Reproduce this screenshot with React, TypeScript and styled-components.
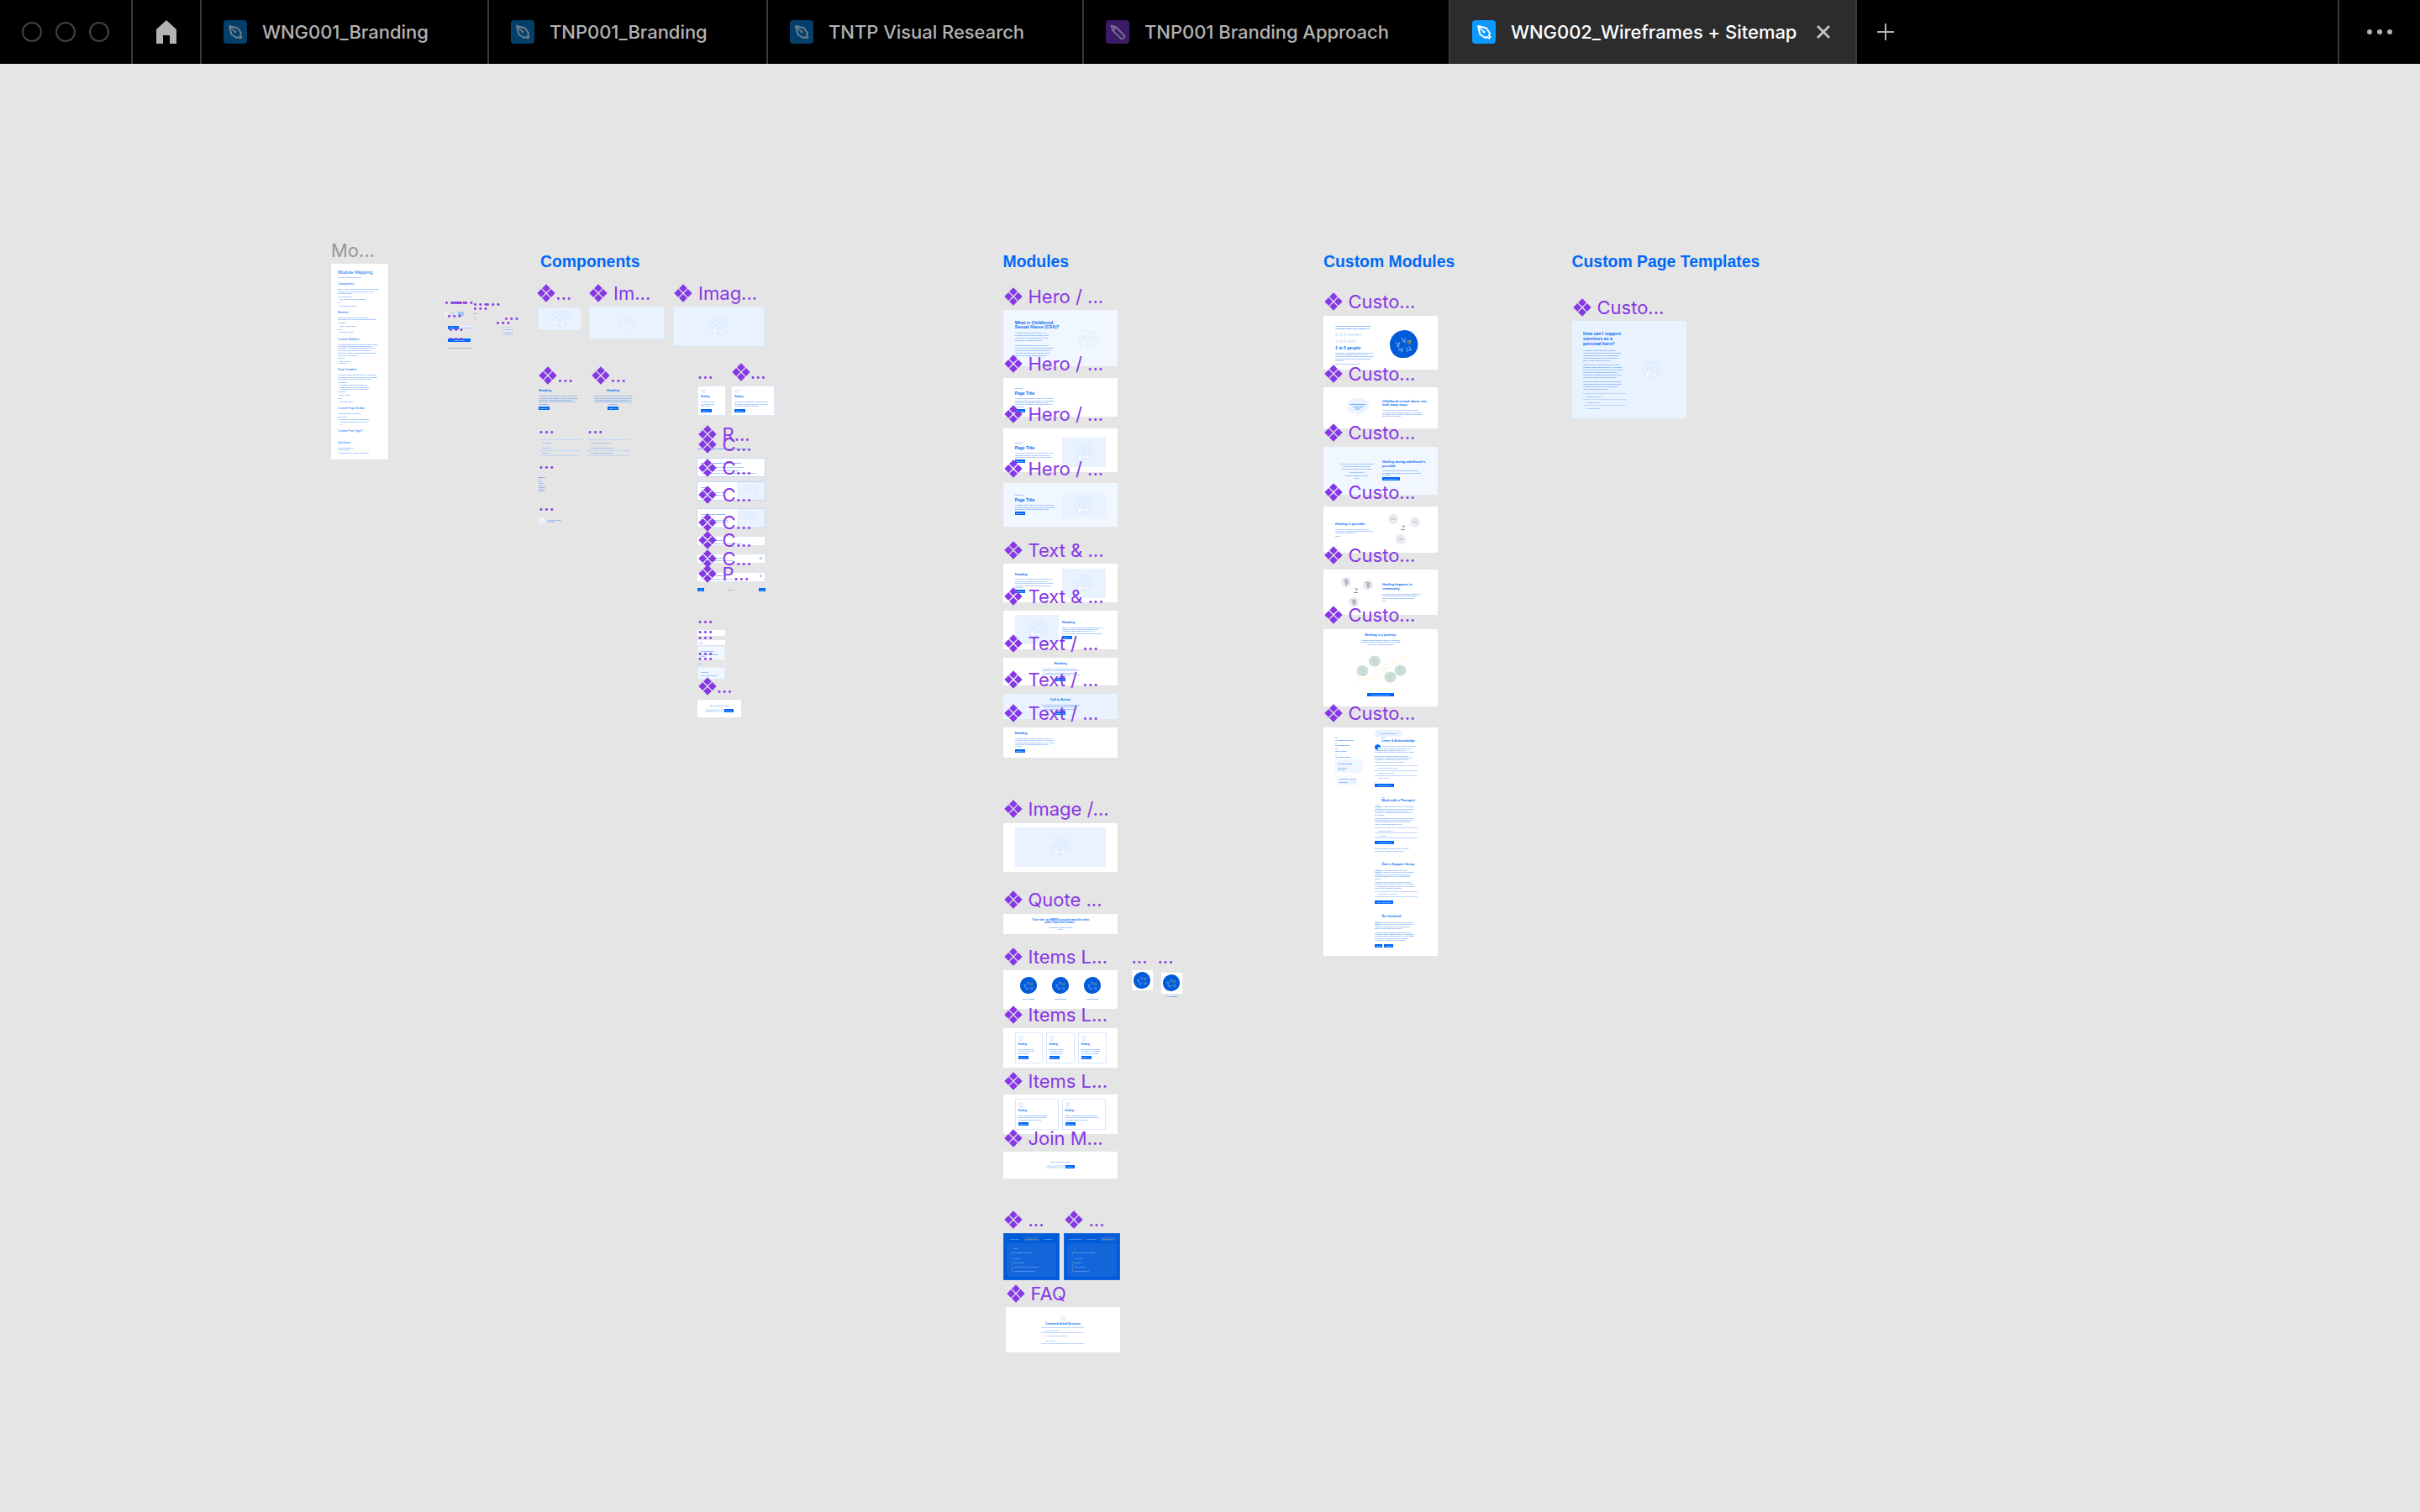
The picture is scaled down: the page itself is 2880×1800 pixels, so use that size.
import React from 'react';
import styled, { createGlobalStyle } from 'styled-components';

const BLUE = '#0069f7';
const PURPLE = '#8638e5';
const TINT = '#e9f2ff';
const PALE = '#f0f7ff';
const DEEP = '#005bd9';

const GlobalStyle = createGlobalStyle`
  body { margin: 0; background: #e5e5e5; font-family: Inter, "Liberation Sans", sans-serif; }
  * { box-sizing: border-box; }
`;

/* ---------- window chrome ---------- */

const Window = styled.div`
  width: 2880px;
  height: 1800px;
  display: flex;
  flex-direction: column;
  overflow: hidden;
  background: #e5e5e5;
`;

const TabBar = styled.header`
  display: flex;
  height: 76px;
  flex: none;
  background: #000;
`;

const WindowControls = styled.div`
  display: flex;
  align-items: center;
  gap: 16px;
  width: 158px;
  padding-left: 26px;
  border-right: 2px solid #3a3a3a;
`;

const Control = styled.span`
  width: 24px;
  height: 24px;
  border: 2px solid #434343;
  border-radius: 50%;
`;

const HomeButton = styled.div`
  display: flex;
  align-items: center;
  justify-content: center;
  width: 82px;
  border-right: 2px solid #3a3a3a;
`;

const Tab = styled.div<{ $w: number; $active?: boolean }>`
  display: flex;
  align-items: center;
  width: ${(p) => p.$w}px;
  padding-left: 26px;
  border-right: 2px solid #3a3a3a;
  background: ${(p) => (p.$active ? '#2c2c2c' : '#000')};
  color: ${(p) => (p.$active ? '#fff' : '#b3b3b3')};
`;

const TabIcon = styled.span<{ $bg: string }>`
  display: flex;
  width: 28px;
  height: 28px;
  border-radius: 4px;
  background: ${(p) => p.$bg};
`;

const TabTitle = styled.span`
  margin-left: 18px;
  font-size: 22px;
  line-height: 28px;
  font-weight: 500;
  letter-spacing: -0.04px;
  white-space: nowrap;
`;

const CloseIcon = styled.svg`
  margin-left: auto;
  margin-right: 29px;
`;

const NewTab = styled.div`
  display: flex;
  align-items: center;
  flex: 1;
  padding-left: 24px;
`;

const MoreButton = styled.div`
  display: flex;
  align-items: center;
  justify-content: center;
  gap: 6px;
  width: 98px;
  border-left: 2px solid #3a3a3a;
`;

const MoreDot = styled.span`
  width: 6px;
  height: 6px;
  border-radius: 50%;
  background: #b3b3b3;
`;

const PenGlyph = ({ color }: { color: string }) => (
  <svg width="28" height="28" viewBox="0 0 28 28" fill="none" stroke={color} strokeWidth="2" strokeLinejoin="round">
    <path d="M7 7 L17 9.5 L21 15.5 L20 18 L21.5 20 L20 21.5 L18 20 L15.5 21 L9.5 17 Z" />
    <path d="M7 7 L13.2 13.2" strokeWidth="1.5" />
    <circle cx="14" cy="14" r="1.4" fill={color} stroke="none" />
  </svg>
);

const MarkerGlyph = ({ color }: { color: string }) => (
  <svg width="28" height="28" viewBox="0 0 28 28" fill="none" stroke={color} strokeWidth="2" strokeLinejoin="round">
    <path d="M6.5 6.5 L12.5 8.5 L22.5 19 Q21.5 22 18.8 22.6 L8.5 12.5 Z" />
    <path d="M8.5 12.5 L12.5 8.5" />
  </svg>
);

/* ---------- drawings inside the frames ---------- */

const Scribble = ({ w, h = w * 0.85, color = '#c4dbf8' }: { w: number; h?: number; color?: string }) => (
  <svg width={w} height={h} viewBox="0 0 80 66" preserveAspectRatio="none" fill="none" stroke={color} strokeWidth="1.5" strokeDasharray="7 2">
    <path d="M8 6 Q22 0 34 6 T58 4 M4 26 Q14 16 22 24 T40 20 Q34 8 24 12 M40 20 Q52 10 60 18 T76 24" />
    <path d="M2 34 Q12 28 18 36 T14 50 Q6 48 8 40 M22 30 Q34 26 38 36 T28 46 Q20 42 22 30" />
    <path d="M44 26 Q56 22 58 34 T46 44 Q40 38 44 26 M62 28 Q76 26 76 38 T64 48 Q56 42 62 28" />
    <path d="M8 60 Q18 50 30 58 T50 56 Q60 50 70 60 M34 62 Q40 50 48 62 M52 12 Q66 4 72 14" />
    <path d="M21 44 h6 v12 h-6z M48 48 h5 v8 h-5z" fill="#fff" stroke="none" />
  </svg>
);

const PeopleDisc = ({ d }: { d: number }) => (
  <svg width={d} height={d} viewBox="0 0 60 60" fill="none" strokeWidth="1.7">
    <path d="M31 0 C47 0 60 13 60 31 C60 48 47 59 29 60 C12 60 0 48 0 30 C0 13 14 1 31 0Z" fill={DEEP} />
    <g stroke="#8fb6ec">
      <path d="M12 28 l7 1 l-4 7 M21 26 l-3 10 l3 3 M24 16 l4 6 l6 -4 M27 26 l4 -4 l2 6" />
      <path d="M18 44 l6 -4 l2 6 M28 38 l-3 9 M34 36 l5 7 l-3 4 M41 34 l5 9 l-6 -1" />
    </g>
    <path d="M35 24 l9 -2 l-6 8 M45 22 l-2 9" stroke="#b8a345" />
  </svg>
);

const Bubble = () => (
  <svg width="26" height="22" viewBox="0 0 26 22">
    <path d="M13 0 C20 0 26 3 26 9 C26 14 21 17.5 16 18 L11 22 L12 18 C5 18 0 15 0 9 C0 3 6 0 13 0Z" fill="#eaf3ff" />
    <path d="M4 7.5 H22 M7 10.5 H19 M10 13 H16" stroke="#4a92f5" strokeWidth="1" strokeDasharray="1.6 .5" />
  </svg>
);

const Circles = ({ busy }: { busy?: boolean }) => (
  <svg width="40" height="36" viewBox="0 0 40 36" fill="none">
    <path d="M10 8 L18 16 L32 10 M18 16 L17 28" stroke="#f0f0f2" strokeWidth=".6" />
    {[[7, 6], [33, 9.5], [16, 30]].map(([x, y]) => (
      <g key={x}>
        <circle cx={x} cy={y} r="6" fill="#e8ebf1" />
        {busy ? (
          <path d={`M${x - 3} ${y - 3}l6 1l-5 2l5 1l-4 2M${x} ${y - 4}v8`} stroke="#8b919c" strokeWidth=".7" />
        ) : (
          <path d={`M${x - 2.5} ${y}h5`} stroke="#8b919c" strokeWidth=".9" strokeDasharray="1 .4" />
        )}
      </g>
    ))}
    <path d="M17.500 13.5l3 1l-2 2M16 18.500h5" stroke="#555b66" strokeWidth=".7" />
  </svg>
);

const Journey = () => (
  <svg width="64" height="34" viewBox="0 0 64 34" fill="none">
    <path d="M2 32 C12 24 34 34 37 22 C38 14 18 18 26 22 C34 26 42 12 40 12 C34 10 34 18 40 17 C50 16 52 4 42 4 C38 4 40 12 48 10 C56 8 54 2 60 3 C64 6 56 6 58 1" stroke="#ffeed6" strokeWidth=".9" />
    {[[25, 8], [10.5, 19.5], [55.5, 19], [43.500, 27]].map(([x, y]) => (
      <g key={x}>
        <ellipse cx={x} cy={y} rx="7" ry="6.6" fill="#cddfd9" />
        <path d={`M${x - 3} ${y - 2}l5 -1l-4 3l5 1M${x - 2} ${y + 3}h4`} stroke="#b4cbc3" strokeWidth=".7" />
      </g>
    ))}
  </svg>
);

/* ---------- frame contents ---------- */

const COPY =
  'Lorem ipsum dolor sit amet, consectetur adipiscing elit sed do eiusmod tempor incididunt ut labore et dolore magna aliqua enim ad minim veniam quis nostrud exercitation ullamco laboris nisi aliquip ex ea commodo consequat duis aute irure dolor in reprehenderit voluptate velit esse cillum dolore eu fugiat nulla pariatur excepteur sint occaecat cupidatat non proident'.split(' ');

/* Takes whole words from the copy until they fill the given width. */
const wordsFor = (start: number, w: number) => {
  const max = w / 0.93;
  let out = '';
  for (let i = start; i < COPY.length; i += 1) {
    const next = out ? `${out} ${COPY[i]}` : COPY[i];
    if (next.length > max + 2) {
      if (out) break;
      return COPY[i].slice(0, Math.max(1, Math.round(max)));
    }
    out = next;
  }
  return out;
};

type Item = { top: number; h: number; node: (ox: number, oy: number) => React.ReactNode };
type Col = { x: number; w: number; center?: boolean; items: Item[] };

const Row = styled.div`
  display: flex;
  align-items: flex-start;
`;

const Column = styled.div<{ $ml: number; $w: number; $center?: boolean }>`
  display: flex;
  flex-direction: column;
  flex: none;
  align-items: ${(p) => (p.$center ? 'center' : 'flex-start')};
  width: ${(p) => p.$w}px;
  margin-left: ${(p) => p.$ml}px;
`;

const Slot = styled.div<{ $mt: number; $h: number }>`
  flex: none;
  height: ${(p) => p.$h}px;
  margin-top: ${(p) => p.$mt}px;
`;

const Heading = styled.div<{ $size: number; $color: string; $weight: number }>`
  font-family: "Liberation Sans", Arial, sans-serif;
  font-size: ${(p) => p.$size}px;
  line-height: ${(p) => p.$size * 1.2}px;
  font-weight: ${(p) => p.$weight};
  color: ${(p) => p.$color};
  white-space: nowrap;
`;

const CopyLine = styled.div<{ $in: number; $color: string; $bold?: boolean }>`
  height: 2px;
  margin-left: ${(p) => p.$in}px;
  font-family: "Liberation Sans", Arial, sans-serif;
  font-size: 1.9px;
  line-height: 2px;
  font-weight: ${(p) => (p.$bold ? 700 : 400)};
  color: ${(p) => p.$color};
  white-space: nowrap;
`;

const Cta = styled.div<{ $w: number }>`
  width: ${(p) => p.$w}px;
  height: 4px;
  background: ${BLUE};
  color: #fff;
  font-family: "Liberation Sans", Arial, sans-serif;
  font-size: 1.8px;
  line-height: 4px;
  text-align: center;
  white-space: nowrap;
`;

const Dot = styled.div<{ $d: number; $bg: string }>`
  width: ${(p) => p.$d}px;
  height: ${(p) => p.$d}px;
  border-radius: 50%;
  background: ${(p) => p.$bg};
`;

const Rule = styled.div<{ $w: number }>`
  width: ${(p) => p.$w}px;
  height: 1px;
  background: #bfd7f8;
`;

const Panel = styled.div<{ $w: number; $h: number; $bg: string; $line?: string; $r?: number }>`
  width: ${(p) => p.$w}px;
  height: ${(p) => p.$h}px;
  background: ${(p) => p.$bg};
  border-radius: ${(p) => p.$r || 0}px;
  box-shadow: ${(p) => (p.$line ? `inset 0 0 0 1px ${p.$line}` : 'none')};
`;

const ArtBox = styled(Panel)`
  display: flex;
  align-items: center;
  justify-content: center;
`;

/* Stacks items in a column; gaps come from each item's place on the canvas. */
const Cols = ({ cols, ox, oy }: { cols: Col[]; ox: number; oy: number }) => {
  let right = ox;
  return (
    <Row>
      {cols.map((c, i) => {
        const ml = c.x - right;
        right = c.x + c.w;
        let bottom = oy;
        return (
          <Column key={i} $ml={ml} $w={c.w} $center={c.center}>
            {c.items.map((it, k) => {
              const mt = it.top - bottom;
              bottom = it.top + it.h;
              return (
                <Slot key={k} $mt={mt} $h={it.h}>
                  {it.node(c.x, it.top)}
                </Slot>
              );
            })}
          </Column>
        );
      })}
    </Row>
  );
};

const t = (cy: number, size: number, text: string, color = BLUE, weight = 700): Item => ({
  top: cy - size * 0.6,
  h: size * 1.2,
  node: () => <Heading $size={size} $color={color} $weight={weight}>{text}</Heading>,
});
let seed = 0;
const l = (cy: number, w: number, indent = 0, color = BLUE, bold = false): Item => {
  seed = (seed * 7 + 13) % 11;
  const start = [0, 2, 5, 9, 12, 14, 18, 21, 25, 28, 31][seed];
  return {
    top: cy - 1,
    h: 2,
    node: () => <CopyLine $in={indent} $color={color} $bold={bold}>{wordsFor(start, w)}</CopyLine>,
  };
};
const ls = (cy: number, n: number, pitch: number, w: number, last = w * 0.7): Item[] =>
  Array.from({ length: n }, (_, i) => l(cy + i * pitch, i === n - 1 ? last : w - ((i * 5) % 4)));
const b = (top: number, w = 12.5, text = 'Button CTA'): Item => ({ top, h: 4, node: () => <Cta $w={w}>{text}</Cta> });
const dot = (cy: number, d: number, bg = TINT): Item => ({ top: cy - d / 2, h: d, node: () => <Dot $d={d} $bg={bg} /> });
const rule = (y: number, w: number): Item => ({ top: y, h: 1, node: () => <Rule $w={w} /> });
const art = (top: number, w: number, h: number, aw = 26, bg = TINT): Item => ({
  top,
  h,
  node: () => <ArtBox $w={w} $h={h} $bg={bg}><Scribble w={aw} /></ArtBox>,
});
const draw = (top: number, h: number, node: React.ReactNode): Item => ({ top, h, node: () => node });
const g = (top: number, w: number, h: number, cols: Col[], bg = 'transparent', line?: string, r?: number): Item => ({
  top,
  h,
  node: (ox, oy) => <Panel $w={w} $h={h} $bg={bg} $line={line} $r={r}><Cols cols={cols} ox={ox} oy={oy} /></Panel>,
});
const c = (x: number, w: number, ...items: Item[]): Col => ({ x, w, items });
const cc = (x: number, w: number, ...items: Item[]): Col => ({ x, w, center: true, items });

type FrameSpec = { x: number; y: number; w: number; h: number; bg?: string; line?: string; cols?: Col[] };
const f = (x: number, y: number, w: number, h: number, bg: string, cols: Col[] = [], line?: string): FrameSpec => ({ x, y, w, h, bg, cols, line });

const W = '#fff';
const NONE = 'transparent';
const EDGE = '#c5d9f3';

const card = (x: number, w: number, y: number, lw: number): Col =>
  c(x, w, g(y, w, 37, [c(x + 3.6, lw, dot(y + 7.5, 6.500), t(y + 14.5, 2.6, 'Heading'), ...ls(y + 20, 3, 2.5, lw), b(y + 28.5))], W, '#dbe8fb'));

const signup = (x: number, cy: number): Col =>
  cc(x, 34, t(cy, 2, 'Stay in touch with WINGS', BLUE, 400), g(cy + 4, 34, 4, [
    c(x, 22.5, g(cy + 4, 22.5, 4, [c(x + 1.5, 12, l(cy + 6, 11, 0, '#8fb9f5'))], '#e1eeff')),
    c(x + 22.5, 11.5, b(cy + 4, 11.5, 'Sign Up')),
  ]));

const stepHead = (x: number, cy: number, title: string, first = false): Item =>
  g(cy - 4.5, 51, 9, [
    c(x, 7, draw(cy - 4, 7, (
      <svg width="7" height="7" viewBox="0 0 7 7">
        <circle cx="3.5" cy="3.5" r="3.3" fill={first ? BLUE : TINT} />
        {first && <path d="M3.500 3.500 L7 4 L7 7 L4 7Z" fill="#fff" />}
      </svg>
    ))),
    c(x + 8.3, 42, l(cy - 3, 4), t(cy + 1, 3.8, title)),
  ]);

const question = (cy: number, w: number) => l(cy, w, 4, '#2f80f5');

const pane = (x: number, active: number): FrameSpec =>
  f(x, 1468, 67, 56, DEEP, [
    c(x + 4, 59,
      g(1472, 59, 6, [0, 1, 2].map((i) => {
        const px = x + 4 + i * 19.5;
        return cc(px, 19.5, g(1472, 19.5, 6, [cc(px + 2, 15.5, l(1475, 15, 0, i === active ? '#d9c860' : '#c5dcfb'))], i === active ? '#1a69d2' : NONE, undefined, 3));
      })),
      g(1480, 59, 40, [
        c(x + 10.3, 1, g(1489, 1, 5, [], '#3f7fcd'), g(1501, 1, 14, [], '#3f7fcd')),
        c(x + 12, 45, l(1486.3, 5, 0, '#a9cbf7'), l(1491.3, 27, 0, '#c5dcfb'), l(1498, 10, 0, '#a9cbf7'), l(1503.3, 16, 0, '#c5dcfb'), l(1508, active === 1 ? 34 : 17, 0, '#c5dcfb'), l(1513, active === 1 ? 30 : 20, 0, '#c5dcfb')),
      ], '#1266da', undefined, 3),
    ),
  ], '#1a6be0');

const M = 1194;
const MX = 1207.7;
const K = 1575;

const frames: FrameSpec[] = [
  f(394, 314, 68, 233, W, [
    c(402, 54,
      t(324, 5.6, 'Module Mapping', BLUE, 400), l(330, 36),
      t(338.3, 3.4, 'Components', BLUE, 400), l(344.3, 51), l(346.7, 47), l(349, 20), l(352.7, 14), l(356.3, 34, 2), l(360, 6), l(363.7, 18, 2),
      t(372.3, 3.4, 'Modules', BLUE, 400), l(378, 47), l(380.3, 52), l(384.3, 14), l(387.7, 20, 2), l(391.7, 6), l(395.3, 20, 2),
      t(403.7, 3.4, 'Custom Modules', BLUE, 400), l(409.7, 50), l(412, 52), l(414.3, 48), l(416.700, 52), l(420.3, 52), l(422.7, 28), l(426.3, 8), l(430, 15, 2), l(432.5, 10, 2),
      t(440.7, 3.4, 'Page Template', BLUE, 400), l(446.7, 50), l(449.3, 52), l(451.700, 46), l(455, 14), l(458.7, 34, 2), l(461, 46, 2), l(463.3, 44, 2), l(466.7, 14), l(470.7, 16, 2), l(474.3, 6), l(478, 20, 2),
      t(486.700, 3.4, 'Custom Page Builder', BLUE, 400), l(492.3, 31), l(496.3, 15), l(499.7, 40, 1), l(502.5, 32, 3), l(505, 2, 3),
      t(513, 3.4, 'Custom Post Type?', BLUE, 400), l(518.7, 1),
      t(527.7, 3.4, 'Questions', BLUE, 400), l(533.3, 19), l(535.7, 17, 1), l(539.7, 41, 1)),
  ]),
  // buttons, tags and icons
  f(528, 370, 90, 48, NONE, [
    c(528, 33, g(370, 33, 6, [c(528, 5, dot(373, 5)), c(537, 4, l(371.500, 3), l(374.500, 3)), c(545, 7, g(371, 7, 5, [c(545, 7, l(372.5, 6), l(374.8, 6))], '#a4c6f4'))]),
      g(386.5, 33, 7, [c(533, 13, b(388, 13)), c(549, 13, g(388, 13, 4, [cc(549, 13, l(390, 9))], '#eaf2ff'))]),
      g(402.7, 33, 4, [c(533, 27, b(402.7, 27, 'Primary   Primary'))]),
      l(414.3, 31, 5, '#3d5d96')),
    c(563, 22, l(373.300, 5), l(379, 2, 1)),
    c(598, 12, g(389, 12, 10, [cc(598, 12, l(392, 9), l(395.7, 9))], '#e5e8ee', '#cdd4e4')),
  ]),
  // image placeholders
  f(640, 366, 51, 27, TINT, [cc(640, 51, art(367, 50, 24))], '#e1ecfc'),
  f(701, 365, 90, 39, TINT, [cc(701, 90, art(366, 88, 36, 21))], '#e1ecfc'),
  f(801, 365, 109, 47, TINT, [cc(801, 109, art(366, 107, 45, 25))], '#e1ecfc'),
  f(641, 462, 52, 27, NONE, [c(641, 51, t(465.7, 3.8, 'Heading'), ...ls(471.3, 5, 2.35, 51, 12), b(484, 12.7))]),
  f(704, 462, 52, 27, NONE, [cc(704, 51, t(465.7, 3.8, 'Heading'), ...ls(471.3, 5, 2.35, 51, 12), b(484, 12.7))]),
  f(830, 459, 34, 36, W, [c(834, 24, dot(465.700, 6), t(473, 2.6, 'Heading'), ...ls(478.3, 3, 2.5, 23), b(487))], '#dbe8fb'),
  f(870, 459, 52, 36, W, [c(874, 44, dot(465.700, 6), t(473, 2.6, 'Heading'), ...ls(478.3, 3, 2.5, 44), b(487))], '#dbe8fb'),
  f(641, 523, 51, 21, NONE, [c(641, 51, rule(523, 51), question(527, 10), question(533, 10), rule(536, 51), question(539, 10), rule(542, 51))]),
  f(699, 523, 51, 21, NONE, [c(699, 51, rule(523, 51), question(527, 29), question(533, 29), rule(536, 51), question(539, 29), rule(542, 51))]),
  f(641, 565, 14, 22, NONE, [c(641, 14, l(567.7, 11, 0, BLUE, true), ...[0, 1, 2, 3, 4, 5, 6].map((i) => l(570.7 + i * 2.3, 7)))]),
  f(641, 616, 36, 8, NONE, [c(641, 8, dot(620, 8)), c(651, 24, l(618.7, 23), l(621.300, 9))]),
  // resource results
  f(830, 532, 82, 5, NONE, [c(830, 80, l(534.3, 62, 0, BLUE, true))]),
  f(829, 545, 82, 23, W, [c(834, 72, l(551, 48, 0, BLUE, true), l(555.7, 61), l(560, 50), l(562.700, 70))], EDGE),
  f(829, 573, 82, 23, W, [c(834, 43, l(579.7, 18, 0, BLUE, true), l(583, 14), l(586.5, 36), l(589, 36)), c(877, 33, art(574, 33, 21, 18))], EDGE),
  f(829, 605, 82, 24, W, [c(834, 43, l(612, 27, 0, BLUE, true), l(615, 14), l(618.5, 36), l(621, 36)), c(877, 33, art(606, 33, 22, 18))], EDGE),
  f(829, 638, 82, 12, W, [c(834, 60, l(642.5, 27, 0, BLUE, true), l(646.500, 54))], '#dbe6f5'),
  f(829, 659, 82, 12, W, [c(834, 60, l(663.500, 27, 0, BLUE, true), l(667.300, 44)), c(904, 3, g(663, 3, 3, [], W, '#a9c9f5'))], '#dbe6f5'),
  f(829, 681, 82, 12, W, [c(834, 60, l(685, 27, 0, BLUE, true), l(688.500, 44)), c(904, 3, g(684, 3, 3, [], W, '#a9c9f5'))], '#dbe6f5'),
  f(830, 699, 81, 5, NONE, [c(830, 8, b(699.500, 8, 'Back')), cc(860, 20, t(701.7, 2, '1    2    3    4    5', '#2f66b5', 400)), c(902.5, 8, b(699.500, 8, 'Next'))]),
  // side filters
  f(830, 750, 33, 7, W, [c(833, 20, l(753.3, 6, 1))]),
  f(830, 762, 33, 6, W, [c(832, 20, l(765, 6))]),
  f(830, 769, 33, 17, PALE, [c(833.5, 26, l(775, 20, 0, BLUE, true), l(779, 18), l(781.300, 8))], '#e3edf9'),
  f(830, 788, 33, 4, NONE, [c(830, 10, l(789.700, 4))]),
  f(830, 794, 33, 15, PALE, [c(833.5, 26, l(799.500, 12), l(803.700, 20))], '#e3edf9'),
  f(830, 833, 52, 21, W, [signup(839, 839.7)]),

  // modules
  f(M, 369, 136, 67, PALE, [
    c(MX, 52, t(384, 5.2, 'What is Childhood'), t(389.500, 5.2, 'Sexual Abuse (CSA)?'), ...ls(396, 4, 3, 49, 32), ...ls(411, 5, 3, 51, 42)),
    c(1281.7, 27, draw(392, 22, <Scribble w={26} h={22} />)),
  ]),
  f(M, 450, 136, 46, W, [c(MX, 52, l(462, 11), t(468.300, 5, 'Page Title'), ...ls(474.300, 5, 2.35, 51, 12), b(487))]),
  f(M, 510, 136, 52, W, [
    c(MX, 52, l(526.700, 11), t(533, 5, 'Page Title'), ...ls(539.3, 3, 2.6, 51, 46), b(547)),
    c(1264, 52, art(521, 52, 35)),
  ]),
  f(M, 575, 136, 52, PALE, [
    c(MX, 52, l(589.3, 11), t(595.3, 5, 'Page Title'), ...ls(601.500, 3, 2.3, 51, 46), b(609)),
    c(1264, 52, art(586, 52, 30)),
  ]),
  f(M, 671, 136, 46, W, [c(MX, 52, t(684.3, 3.8, 'Heading'), ...ls(689.500, 5, 2.35, 51, 12), b(702)), c(1264, 52, art(677, 52, 35))]),
  f(M, 727, 136, 46, W, [c(MX, 52, art(732, 52, 35)), c(1264, 52, t(741.3, 3.8, 'Heading'), ...ls(746.700, 4, 2.35, 51, 50), b(757))]),
  f(M, 783, 136, 33, W, [cc(1237, 50, t(790.7, 3.8, 'Heading'), ...ls(796, 4, 2.35, 50, 48), b(806.700))]),
  f(M, 826, 136, 30, TINT, [cc(1237, 50, t(833.700, 3.8, 'Call to Action'), ...ls(839, 3, 2.3, 50, 40), b(846.700))]),
  f(M, 866, 136, 36, W, [c(MX, 52, t(873.700, 3.8, 'Heading'), ...ls(879, 5, 2.35, 51, 12), b(892))]),
  f(M, 980, 136, 58, W, [c(1208, 108, art(985, 108, 47))]),
  f(M, 1088, 136, 24, W, [cc(1220, 84, t(1095.3, 3, '“Over time, my WINGS group became the safest'), t(1099, 3, 'place I have ever known.”'), l(1103.700, 31), l(1106.300, 5))]),
  f(M, 1155, 136, 46, W, [1214, 1252, 1290].map((x, i) => cc(x, 20, draw(1163.3, 20, <PeopleDisc d={20} />), t(1190, 2.4, ['1 in 4 people', '1 in 5 people', '1 in 6 people'][i])))),
  f(1347, 1155, 25, 24, W, [c(1348.7, 20, draw(1156.500, 20, <PeopleDisc d={20} />))]),
  f(1382, 1158, 25, 25, W, [cc(1384.300, 20, draw(1160.300, 20, <PeopleDisc d={20} />), t(1187, 2.4, '1 in 4 people'))]),
  f(M, 1224, 136, 47, W, [card(1208, 33, 1229, 23), card(1245, 34, 1229, 24), card(1283, 34, 1229, 24)]),
  f(M, 1303, 136, 47, W, [card(1208, 52, 1308, 44), card(1264, 52, 1308, 44)]),
  f(M, 1371, 136, 32, W, [signup(1245, 1383.3)]),
  pane(M, 1),
  pane(1266, 2),
  f(1197, 1556, 136, 54, W, [cc(1239.3, 51.4, dot(1569.700, 5.500), t(1576.700, 3.1, 'Commonly Asked Questions'), rule(1580, 51), g(1582.500, 51, 2, [c(1239.3, 51, question(1583.700, 21))]), rule(1586, 51), g(1589, 51, 2, [c(1239.3, 51, question(1590, 32))]), g(1595, 51, 2, [c(1239.3, 51, question(1596, 21))]), rule(1599, 51))]),

  // custom modules
  f(K, 376, 136, 64, W, [
    c(1589, 52, t(388.4, 2.3, 'If you are a survivor, you are not alone.'), t(391.2, 2.3, 'Childhood Sexual Abuse happens to:'), t(398.4, 5, '1 in 4 women', '#cadefa'), t(406, 5, '1 in 6 men', '#cadefa'), t(414.300, 5, '1 in 5 people'), ...ls(419.800, 5, 2.35, 51, 18), l(433.500, 31)),
    c(1654.3, 33.4, draw(393, 33.4, <PeopleDisc d={33.4} />)),
  ]),
  f(K, 461, 136, 49, W, [c(1602.500, 26, draw(474, 22, <Bubble />)), c(1645, 52, t(478.300, 3.9, 'Childhood sexual abuse can'), t(482.800, 3.9, 'look many ways.'), ...ls(488.300, 4, 2.35, 51, 28))]),
  f(K, 532, 136, 57, PALE, [
    cc(1592, 45, l(552.300, 43), l(555.200, 36), l(558.5, 43), l(562, 18), l(566, 32), l(569, 5)),
    c(1645, 52, t(550.400, 3.9, 'Healing during adulthood is'), t(554.900, 3.9, 'possible'), ...ls(560.400, 3, 2.4, 51, 12), b(568.500, 20.700, 'Find a support group')),
  ]),
  f(K, 603, 136, 55, W, [c(1589, 50, t(624, 3.9, 'Healing is possible.'), ...ls(629.600, 3, 2.4, 49, 22), l(638.400, 5)), c(1651.300, 40, draw(611.700, 36, <Circles />))]),
  f(K, 678, 136, 54, W, [c(1594.700, 40, draw(686.800, 36, <Circles busy />)), c(1645, 52, t(696.500, 3.9, 'Healing happens in'), t(701.300, 3.9, 'community.'), ...ls(707, 3, 2.35, 51, 43), l(715.500, 5))]),
  f(K, 749, 136, 92, W, [cc(1611, 64, t(756.800, 3.9, 'Healing is a journey.'), ...ls(762, 3, 2.4, 50, 34), draw(779.500, 34, <Journey />), b(825.500, 31.700, 'Begin your healing journey'))]),
  f(K, 866, 136, 272, W, [
    c(1588.700, 34,
      l(878, 3), l(880.5, 17, 0, BLUE, true), l(884.700, 3), l(887.200, 17, 0, BLUE, true), l(891.300, 3), l(893.800, 17, 0, BLUE, true), l(898.300, 3), l(900.800, 19, 0, BLUE, true),
      g(904.300, 33.300, 16, [c(1592, 26, l(909.300, 21, 0, BLUE, true), l(913.700, 19), l(916, 10))], PALE),
      g(924, 33.300, 13, [c(1592, 24, l(926.700, 21, 0, BLUE, true), g(929, 23, 4.700, [c(1594, 14, l(931.500, 10))], TINT))], W, '#fafcff')),
    c(1636, 52,
      g(869, 32.700, 7.500, [cc(1636, 32.700, l(872.700, 18))], TINT, undefined, 4),
      stepHead(1636, 880.8, 'Learn & Acknowledge', true),
      ...ls(888.300, 4, 2.350, 51, 50), ...ls(899.700, 4, 2.350, 51, 36),
      rule(911, 51), question(914.300, 24), rule(917, 51), question(920.300, 22), rule(923, 51), question(926.300, 16), b(933.500, 22.700, 'Learn about healing'),
      stepHead(1636, 952.500, 'Work with a Therapist'),
      ...ls(960.300, 5, 2.350, 51, 12), ...ls(973.700, 4, 2.350, 51, 36),
      rule(985, 51), question(988.700, 23), rule(991, 51), question(994.700, 14), rule(997, 51), b(1001.500, 23, 'Find a therapist now'), l(1010.300, 47), l(1012.700, 40),
      stepHead(1636, 1028.800, 'Join a Support Group'),
      ...ls(1036.300, 5, 2.350, 51, 13), ...ls(1050.300, 4, 2.350, 51, 37),
      rule(1061, 51), question(1064.700, 28), rule(1067, 51), b(1072, 21.700, 'Join a WINGS group'),
      stepHead(1636, 1090.800, 'Get Involved'),
      ...ls(1098.300, 4, 2.350, 51, 36), ...ls(1110, 5, 2.350, 51, 39),
      g(1124, 30, 4, [c(1636, 9, b(1124, 9, 'Donate')), c(1647, 11, b(1124, 11, 'Volunteer'))])),
  ]),

  // custom page templates
  f(1871, 382, 136, 116, TINT, [
    c(1884, 54, t(397, 5.2, 'How can I support'), t(403, 5.2, 'survivors as a'), t(409, 5.2, 'personal hero?'), ...ls(417, 5, 3, 51, 34), ...ls(434, 6, 3, 51, 40), ...ls(454, 4, 3, 51, 30), rule(468, 51), question(472, 24), rule(475, 51), question(479, 24), rule(482, 51), question(486, 24)),
    c(1953, 26, draw(429, 22, <Scribble w={26} h={22} />)),
  ]),
];

/* ---------- canvas ---------- */

const Canvas = styled.main`
  position: relative;
  flex: 1;
  overflow: hidden;
`;

/* Frames and their labels sit at free canvas positions, measured from the window's top. */
const FrameBox = styled.section<{ $s: FrameSpec }>`
  position: absolute;
  left: ${(p) => p.$s.x}px;
  top: ${(p) => p.$s.y - 76}px;
  width: ${(p) => p.$s.w}px;
  height: ${(p) => p.$s.h}px;
  background: ${(p) => p.$s.bg};
  box-shadow: ${(p) => (p.$s.line ? `inset 0 0 0 1px ${p.$s.line}` : 'none')};
`;

const SectionTitle = styled.h2<{ $x: number }>`
  position: absolute;
  left: ${(p) => p.$x}px;
  top: 224px;
  margin: 0;
  font-family: "Liberation Sans", Arial, sans-serif;
  font-size: 19.4px;
  line-height: 22px;
  font-weight: 700;
  color: ${BLUE};
  white-space: nowrap;
`;

const Label = styled.div<{ $x: number; $y: number; $gap: number; $color?: string }>`
  position: absolute;
  left: ${(p) => p.$x}px;
  top: ${(p) => p.$y - 76 - 13}px;
  display: flex;
  align-items: center;
  gap: ${(p) => p.$gap}px;
  height: 26px;
  font-size: 22px;
  line-height: 26px;
  color: ${(p) => p.$color || PURPLE};
  white-space: nowrap;
`;

const ComponentMark = () => (
  <svg width="22" height="22" viewBox="0 0 22 22" fill={PURPLE}>
    {[[11, 5.200], [5.200, 11], [16.800, 11], [11, 16.800]].map(([x, y]) => (
      <path key={`${x}-${y}`} d={`M${x} ${y - 4.900}l4.900 4.900l-4.900 4.900l-4.900 -4.900z`} />
    ))}
  </svg>
);

type LabelSpec = [cx: number, cy: number, text: string, tight?: boolean];

const labels: LabelSpec[] = [
  [650.3, 348.7, '...', true], [712.3, 348.7, 'Im...'], [813.3, 348.7, 'Imag...'],
  [652.3, 446.7, '...', true], [715.3, 446.7, '...', true], [881.7, 442.7, '...', true],
  [841.7, 516.7, 'R...'], [841.7, 528.7, 'C...'], [841.7, 556.7, 'C...'], [841.7, 588.7, 'C...'],
  [841.7, 621.7, 'C...'], [841.7, 642.7, 'C...'], [841.7, 664.7, 'C...'], [841.7, 682.7, 'P...'],
  [841.7, 816.7, '...', true],
  [1205.7, 352.7, 'Hero / ...'], [1205.7, 432.7, 'Hero / ...'], [1205.7, 492.7, 'Hero / ...'], [1205.7, 557.7, 'Hero / ...'],
  [1205.7, 654.7, 'Text & ...'], [1205.7, 709.7, 'Text & ...'], [1205.7, 765.7, 'Text / ...'], [1205.7, 808.7, 'Text / ...'], [1205.7, 848.7, 'Text / ...'],
  [1205.7, 962.7, 'Image /...'], [1205.7, 1070.7, 'Quote ...'],
  [1205.7, 1138.7, 'Items L...'], [1205.7, 1207.7, 'Items L...'], [1205.7, 1286.7, 'Items L...'], [1205.7, 1354.7, 'Join M...'],
  [1205.7, 1451.7, '...'], [1277.7, 1451.7, '...'], [1208.7, 1539.7, 'FAQ'],
  [1586.7, 358.7, 'Custo...'], [1586.7, 444.7, 'Custo...'], [1586.7, 514.7, 'Custo...'], [1586.7, 585.7, 'Custo...'],
  [1586.7, 660.7, 'Custo...'], [1586.7, 731.7, 'Custo...'], [1586.7, 848.7, 'Custo...'],
  [1882.7, 365.7, 'Custo...'],
];

const dotLabels: [number, number][] = [
  [529.7, 360.3], [537.7, 360.3], [540, 360.3], [546.500, 360.3], [563.7, 362.3], [578.7, 362.3], [563.7, 367.3], [600.7, 379.3], [590.7, 384.3],
  [532.7, 376.3], [534.7, 392.3], [534.7, 403.3],
  [831.3, 449.3], [642.3, 514.3], [700.3, 514.3], [642.3, 556.3], [642.3, 606.3],
  [831.3, 740.3], [831.3, 752.3], [831.3, 759.3], [831.3, 778.7], [831.3, 784.3],
  [1348, 1145.7], [1379, 1145.7],
];

const sections: [number, string][] = [
  [643, 'Components'], [1193.500, 'Modules'], [1575, 'Custom Modules'], [1870.500, 'Custom Page Templates'],
];

const tabs = [
  { w: 342, title: 'WNG001_Branding', bg: '#043f6b' },
  { w: 332, title: 'TNP001_Branding', bg: '#043f6b' },
  { w: 376, title: 'TNTP Visual Research', bg: '#043f6b' },
  { w: 436, title: 'TNP001 Branding Approach', bg: '#3c1b66', marker: true },
  { w: 484, title: 'WNG002_Wireframes + Sitemap', bg: '#0d99ff', active: true },
];

export default function App() {
  return (
    <Window>
      <GlobalStyle />
      <TabBar>
        <WindowControls>
          <Control />
          <Control />
          <Control />
        </WindowControls>
        <HomeButton>
          <svg width="26" height="28" viewBox="0 0 26 28">
            <path d="M13 0 L25 11 V28 H17 V18 H9 V28 H1 V11 Z" fill="#b3b3b3" />
          </svg>
        </HomeButton>
        {tabs.map((tab) => (
          <Tab key={tab.title} $w={tab.w} $active={tab.active}>
            <TabIcon $bg={tab.bg}>
              {tab.marker ? <MarkerGlyph color="#7b6a90" /> : <PenGlyph color={tab.active ? '#fff' : '#6d7f8c'} />}
            </TabIcon>
            <TabTitle>{tab.title}</TabTitle>
            {tab.active && (
              <CloseIcon width="18" height="18" viewBox="0 0 18 18" stroke="#c4c4c4" strokeWidth="2.8">
                <path d="M2 2 L16 16 M16 2 L2 16" />
              </CloseIcon>
            )}
          </Tab>
        ))}
        <NewTab>
          <svg width="20" height="20" viewBox="0 0 20 20" stroke="#b3b3b3" strokeWidth="2">
            <path d="M10 0 V20 M0 10 H20" />
          </svg>
        </NewTab>
        <MoreButton>
          <MoreDot />
          <MoreDot />
          <MoreDot />
        </MoreButton>
      </TabBar>
      <Canvas>
        {frames.map((s, i) => (
          <FrameBox key={i} $s={s}>
            <Cols cols={s.cols || []} ox={s.x} oy={s.y} />
          </FrameBox>
        ))}
        {sections.map(([x, title]) => (
          <SectionTitle key={title} $x={x}>{title}</SectionTitle>
        ))}
        <Label $x={394} $y={297.700} $gap={0} $color="#979797">Mo...</Label>
        {labels.map(([cx, cy, text, tight], i) => (
          <Label key={i} $x={cx - 11} $y={cy} $gap={tight ? 0 : 6.8}>
            <ComponentMark />
            {text}
          </Label>
        ))}
        {dotLabels.map(([x, y], i) => (
          <Label key={i} $x={x - 1.500} $y={y - 6.700} $gap={0}>...</Label>
        ))}
      </Canvas>
    </Window>
  );
}
